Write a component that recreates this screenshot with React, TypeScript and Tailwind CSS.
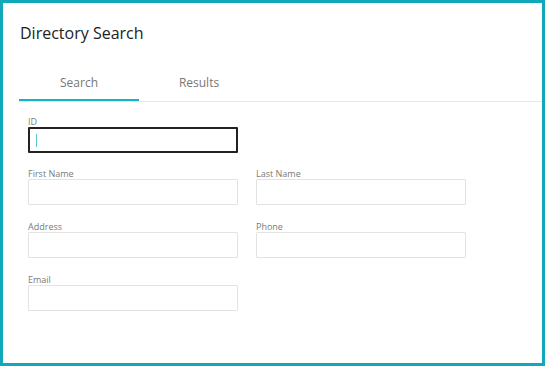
import React from "react";

function Field({ label, focused = false }: { label: string; focused?: boolean }) {
  return (
    <div className="flex flex-col w-[210px]">
      <label className="text-[9px] leading-[11px] text-[#7a7a7a] h-[11px]">{label}</label>
      {focused ? (
        <div className="h-[26px] border-2 border-[#222] rounded-[1px] flex items-center pl-[6px]">
          <div className="w-[1px] h-[13px] bg-[#5cc4d0]" />
        </div>
      ) : (
        <div className="h-[26px] border border-[#e3e3e3] rounded-[1px]" />
      )}
    </div>
  );
}

export default function App() {
  return (
    <div
      className="w-[545px] h-[366px] border-[3px] border-[#10a8ba] bg-white"
      style={{ fontFamily: "'Open Sans', 'Liberation Sans', sans-serif" }}
    >
      <div className="pl-[16px] pt-[19px]">
        <h1 className="text-[16px] leading-[22px] text-[#222] pl-[1px]">Directory Search</h1>
      </div>
      <div className="mt-[31px] ml-[16px] flex border-b border-[#e6e6e6]">
        <div className="w-[120px] h-[26px] flex items-start justify-center text-[12px] leading-[16px] text-[#777] border-b-2 border-[#1ab0c4] -mb-[1px]">
          Search
        </div>
        <div className="w-[120px] h-[26px] flex items-start justify-center text-[12px] leading-[16px] text-[#777]">
          Results
        </div>
      </div>
      <div className="pl-[25px] pt-[14px] flex flex-col">
        <div className="flex gap-[18px]">
          <Field label="ID" focused />
        </div>
        <div className="flex gap-[18px] mt-[15px]">
          <Field label="First Name" />
          <Field label="Last Name" />
        </div>
        <div className="flex gap-[18px] mt-[16px]">
          <Field label="Address" />
          <Field label="Phone" />
        </div>
        <div className="flex gap-[18px] mt-[16px]">
          <Field label="Email" />
        </div>
      </div>
    </div>
  );
}
